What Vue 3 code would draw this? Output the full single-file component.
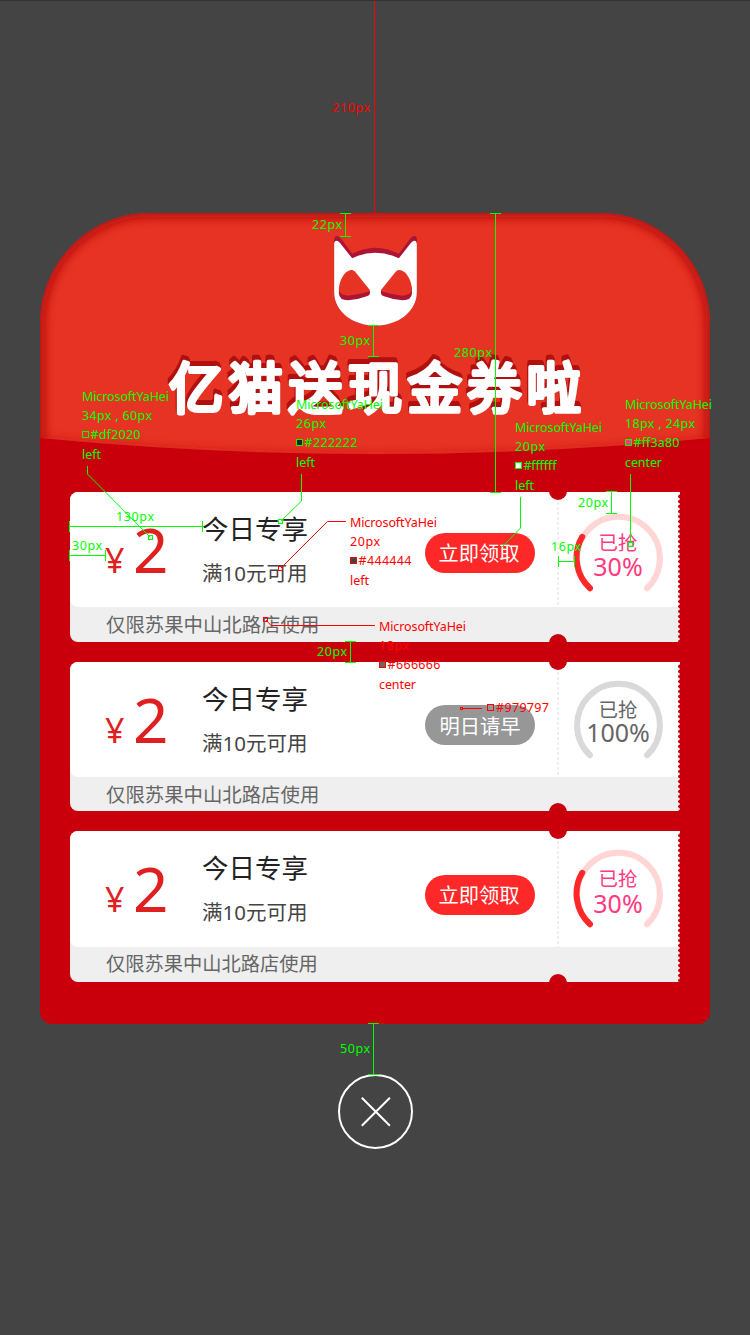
<script setup>
const tickets = [
  { id: 1, button: '立即领取', percent: 30, soldOut: false },
  { id: 2, button: '明日请早', percent: 100, soldOut: true },
  { id: 3, button: '立即领取', percent: 30, soldOut: false }
]

const G = '#00ff00'
const R = '#ff0000'

// Distance markers: v = vertical, h = horizontal
const measures = [
  { dir: 'v', at: 374.5, from: 0.5, to: 213.5, label: '210px', x: 332, y: 112, w: 38, c: R },
  { dir: 'v', at: 345.5, from: 213.5, to: 236.5, label: '22px', x: 312, y: 229, w: 30, c: G },
  { dir: 'v', at: 373.5, from: 325.5, to: 356.5, label: '30px', x: 340, y: 345, w: 30, c: G },
  { dir: 'v', at: 495.5, from: 213.5, to: 492.5, label: '280px', x: 454, y: 357, w: 38, c: G },
  { dir: 'h', at: 526.5, from: 69.5, to: 202.5, label: '130px', x: 116, y: 521, w: 38, c: G },
  { dir: 'h', at: 555.5, from: 69.5, to: 105.5, label: '30px', x: 72, y: 550, w: 30, c: G },
  { dir: 'v', at: 611.5, from: 491.5, to: 513.5, label: '20px', x: 578, y: 507, w: 30, c: G },
  { dir: 'h', at: 561.5, from: 558.5, to: 574.5, label: '16px', x: 551, y: 551, w: 30, c: G },
  { dir: 'v', at: 350.5, from: 641.5, to: 662.5, label: '20px', x: 317, y: 656, w: 30, c: G },
  { dir: 'v', at: 373.5, from: 1023.5, to: 1074.5, label: '50px', x: 340, y: 1053, w: 30, c: G }
]

const measurePath = (m) =>
  m.dir === 'v'
    ? `M${m.at} ${m.from}V${m.to}M${m.at - 5.5} ${m.from}h11M${m.at - 5.5} ${m.to}h11`
    : `M${m.from} ${m.at}H${m.to}M${m.from} ${m.at - 5.5}v11M${m.to} ${m.at - 5.5}v11`

const notes = [
  { x: 82, y: 401, size: '34px , 60px', sw: 70, hex: '#df2020', hw: 50, fill: 'none', align: 'left', aw: 19, c: G, line: '87.5,466 87.5,474 150,537', dot: [148.5, 535.5] },
  { x: 296, y: 409, size: '26px', sw: 30, hex: '#222222', hw: 53, fill: '#222222', align: 'left', aw: 19, c: G, line: '301.5,474 301.5,501 281,521', dot: [278.5, 519.5] },
  { x: 515, y: 432, size: '20px', sw: 30, hex: '#ffffff', hw: 33, fill: '#ffffff', align: 'left', aw: 19, c: G, line: '520.5,497 520.5,528 501,548', dot: null },
  { x: 625, y: 409, size: '18px , 24px', sw: 70, hex: '#ff3a80', hw: 46, fill: '#ff3a80', align: 'center', aw: 37, c: G, line: '630.5,474 630.5,542', dot: [628.5, 542.5] },
  { x: 350, y: 527, size: '20px', sw: 30, hex: '#444444', hw: 53, fill: '#444444', align: 'left', aw: 19, c: R, line: '346,521.5 327.5,521.5 281,568', dot: [278.5, 566.5] },
  { x: 379, y: 631, size: '18px', sw: 30, hex: '#666666', hw: 53, fill: '#666666', align: 'center', aw: 37, c: R, line: '375,625.5 271,625.5 266,620', dot: [263.5, 617.5] }
]
</script>

<template>
  <div class="page">
    <main class="envelope">
      <svg class="flap" width="670" height="242" viewBox="0 0 670 242">
        <defs>
          <clipPath id="flap-clip">
            <path d="M0 110A110 110 0 0 1 110 0H560A110 110 0 0 1 670 110V225Q335 257 0 225Z" />
          </clipPath>
          <filter id="flap-blur" filterUnits="userSpaceOnUse" x="-40" y="-40" width="750" height="330">
            <feGaussianBlur stdDeviation="5.5" />
          </filter>
        </defs>
        <g clip-path="url(#flap-clip)">
          <rect width="670" height="242" fill="#e63323" />
          <path d="M-8 250V110A118 118 0 0 1 110 -8H560A118 118 0 0 1 678 110V250" fill="none" stroke="#b00808" stroke-width="24" filter="url(#flap-blur)" />
          <path d="M0 232Q335 264 670 232" fill="none" stroke="#c71812" stroke-width="10" filter="url(#flap-blur)" />
        </g>
      </svg>

      <header class="head">
        <svg class="cat" width="83" height="90" viewBox="102.5 93 249 270">
          <path fill="#ab1435" d="M103 108Q103 93 111 93Q118 93 124 101L157 146Q226 110 297 146L332 100Q338 93 345 93Q351 94 351 104V262C351 320 295 362 227 362C159 362 103 320 103 262Z" />
          <path fill="#fff" d="M103 116Q104 107 110 107Q115 107 120 113L157 160Q226 126 297 160L333 114Q339 107 344 107Q350 107 351 117V262C351 320 295 362 227 362C159 362 103 320 103 262Z" />
          <g id="eye">
            <path fill="#ab1435" d="M118 246L205 252Q212 256 210 266Q209 271 201 274Q175 284 145 286Q118 286 117 265Z" />
            <path fill="#e63323" d="M150 196Q160 192 166 200L210 255Q209 259 200 262Q170 270 145 272Q118 271 117 253C119 225 133 201 150 196Z" />
          </g>
          <use href="#eye" transform="translate(453.5 0) scale(-1 1)" />
        </svg>
        <svg class="title" width="430" height="80" viewBox="0 0 430 80">
          <text x="9" y="62">亿猫送现金券啦</text>
        </svg>
      </header>

      <section class="list">
        <article v-for="t in tickets" :key="t.id" class="ticket" :class="['t' + t.id, { sold: t.soldOut }]">
          <div class="main">
            <div class="price"><span class="yen">¥</span><span class="num">2</span></div>
            <div class="info">
              <div class="name">今日专享</div>
              <div class="cond">满10元可用</div>
            </div>
            <button class="btn">{{ t.button }}</button>
            <div class="stub">
              <div class="ring">
                <svg width="90" height="84" viewBox="0 0 90 84">
                  <path class="track" d="M17 75.2A41.4 41.4 0 1 1 74 75.2" />
                  <path v-if="!t.soldOut" class="arc" d="M17 75.2A41.4 41.4 0 0 1 9.2 23.8" />
                </svg>
                <div class="rate">
                  <span class="grabbed">已抢</span>
                  <span class="pct">{{ t.percent }}%</span>
                </div>
              </div>
            </div>
          </div>
          <div class="foot">仅限苏果中山北路店使用</div>
          <i class="notch top"></i>
          <i class="notch bottom"></i>
          <i class="teeth"></i>
        </article>
      </section>
    </main>

    <svg class="close" width="76" height="77" viewBox="0 0 76 77" fill="none" stroke="#fff">
      <circle cx="37.5" cy="38.5" r="36.5" stroke-width="2" />
      <path d="M23.8 24.7L51.9 52.8M51.9 24.7L23.8 52.8" stroke-width="2" />
    </svg>

    <svg class="overlay" width="750" height="1335" viewBox="0 0 750 1335">
      <g v-for="(m, i) in measures" :key="'m' + i">
        <path :d="measurePath(m)" :stroke="m.c" fill="none" />
        <text :x="m.x" :y="m.y" :fill="m.c" :textLength="m.w">{{ m.label }}</text>
      </g>
      <g v-for="(n, i) in notes" :key="'n' + i">
        <text :x="n.x" :y="n.y" :fill="n.c" textLength="87">MicrosoftYaHei</text>
        <text :x="n.x" :y="n.y + 19" :fill="n.c" :textLength="n.sw">{{ n.size }}</text>
        <rect :x="n.x + 0.5" :y="n.y + 30.5" width="6" height="6" :fill="n.fill" :stroke="n.c" />
        <text :x="n.x + 8.5" :y="n.y + 38" :fill="n.c" :textLength="n.hw">{{ n.hex }}</text>
        <text :x="n.x" :y="n.y + 58" :fill="n.c" :textLength="n.aw">{{ n.align }}</text>
        <polyline :points="n.line" :stroke="n.c" fill="none" />
        <rect v-if="n.dot" :x="n.dot[0]" :y="n.dot[1]" width="4" height="4" fill="none" :stroke="n.c" />
      </g>
      <path d="M463 708.5H482" stroke="#ff0000" />
      <rect x="460.5" y="707.5" width="2" height="2" fill="none" stroke="#ff0000" />
      <rect x="487.5" y="704.5" width="6" height="6" fill="none" stroke="#ff0000" />
      <text x="496" y="712" fill="#ff0000" textLength="53">#979797</text>
    </svg>
  </div>
</template>

<style>
body {
  background: #444;
}
</style>

<style scoped>
.page {
  position: relative;
  box-sizing: border-box;
  width: 750px;
  height: 1335px;
  padding-top: 212px;
  overflow: hidden;
  display: flex;
  flex-direction: column;
  align-items: center;
  background: #444;
  border-top: 1px solid #333;
  font-family: "Noto Sans", "Noto Sans CJK SC", sans-serif;
}
.envelope {
  position: relative;
  box-sizing: border-box;
  flex: none;
  width: 670px;
  height: 811px;
  border-radius: 110px 110px 12px 12px;
  background: #c9000c;
}
.flap {
  position: absolute;
  left: 0;
  top: 0;
}
.head {
  position: relative;
  height: 279px;
  display: flex;
  flex-direction: column;
  align-items: center;
}
.cat {
  display: block;
  margin-top: 23px;
}
.title {
  display: block;
  margin-top: 20px;
  font: 400 54.5px "Noto Sans CJK SC", sans-serif;
  letter-spacing: 5.1px;
  fill: #fff;
  stroke: #fff;
  stroke-width: 4.2px;
  stroke-linejoin: round;
  stroke-linecap: round;
  filter: drop-shadow(0 -2.5px 0 #b01010) drop-shadow(-0.5px -2px 0 #b01010);
}
.list {
  position: relative;
  padding: 0 30px;
  display: flex;
  flex-direction: column;
  gap: 20px;
}
.ticket {
  --main: 115px;
  --foot: 35px;
  --ring: 18px;
  --btn: 43px;
  --label: 17px;
  --name: 19px;
  position: relative;
  border-radius: 8px 0 0 8px;
  background: #efefef;
  overflow: hidden;
}
.t1 {
  --ring: 21px;
  --btn: 41px;
}
.t2 {
  --foot: 34px;
}
.t3 {
  --main: 116px;
  --btn: 44px;
}
.main {
  height: var(--main);
  display: flex;
  align-items: flex-start;
  background: #fff;
  border-radius: 0 0 0 8px;
}
.price {
  width: 96px;
  padding: 14px 0 0 35px;
  display: flex;
  align-items: baseline;
  color: #df2020;
  line-height: 86px;
}
.t1 .price {
  padding-top: 14px;
}
.yen {
  width: 28px;
  font-size: 34px;
}
.num {
  font-size: 62px;
}
.info {
  width: 224px;
  padding-top: var(--name);
  white-space: nowrap;
}
.name {
  height: 36px;
  font-size: 26.5px;
  line-height: 36px;
  color: #222;
}
.cond {
  padding-top: 11px;
  font-size: 20.5px;
  line-height: 30px;
  color: #444;
}
.info {
  margin-left: 1px;
  width: 223px;
}
.btn {
  box-sizing: border-box;
  width: 110px;
  height: 40px;
  margin: var(--btn) 0 0;
  padding: 0 2px 2px 0;
  border: 0;
  border-radius: 20px;
  background: #ff2829;
  color: #fff;
  font: 20.3px/38px "Noto Sans CJK SC", sans-serif;
  text-align: center;
}
.sold .btn {
  padding: 0;
  background: #979797;
}
.stub {
  width: 122px;
  height: 100%;
  margin-left: 22px;
  padding-left: 16px;
  box-sizing: border-box;
  background: repeating-linear-gradient(#efefef 0 3px, #fff 3px 5px) 0 0 / 2px 100% no-repeat;
}
.ring {
  display: grid;
  width: 90px;
  margin-top: var(--ring);
}
.ring > * {
  grid-area: 1 / 1;
}
.track,
.arc {
  fill: none;
  stroke-width: 6;
  stroke-linecap: round;
}
.track {
  stroke: #ffd5d5;
}
.arc {
  stroke: #ff2829;
}
.sold .track {
  stroke: #d9d9d9;
}
.rate {
  padding-top: var(--label);
  display: flex;
  flex-direction: column;
  align-items: center;
  color: #ff3a80;
}
.sold .rate {
  color: #666;
}
.grabbed {
  font: 19.5px/24px "Noto Sans CJK SC", sans-serif;
}
.pct {
  font-size: 25px;
  line-height: 25px;
}
.t3 .pct {
  line-height: 27px;
}
.sold .pct {
  line-height: 23px;
}
.foot {
  height: var(--foot);
  padding-left: 36px;
  font: 19.4px/33px "Noto Sans CJK SC", sans-serif;
  color: #666;
}
.t3 .foot {
  font-size: 19.25px;
}
.notch {
  position: absolute;
  left: 479px;
  width: 18px;
  height: 18px;
  border-radius: 50%;
  background: #c9000c;
}
.notch.top {
  top: -10px;
}
.notch.bottom {
  bottom: -10px;
}
.teeth {
  position: absolute;
  right: 0;
  top: 2px;
  bottom: 0;
  width: 2px;
  background: radial-gradient(circle at 2.4px 2.5px, #c9000c 2px, transparent 2.3px) 0 0 / 2px 5px repeat-y;
}
.close {
  flex: none;
  margin: 49px 0 0 1px;
}
.overlay {
  position: absolute;
  left: 0;
  top: -1px;
  font: 12.5px "Noto Sans", sans-serif;
}
</style>
